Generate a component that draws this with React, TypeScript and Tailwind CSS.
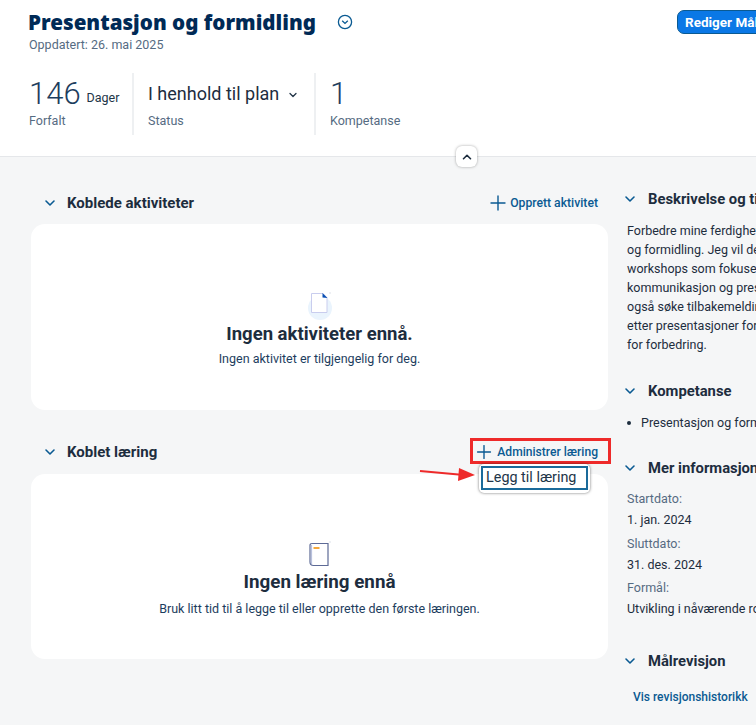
import { Plus, ChevronDown, ChevronUp } from "lucide-react";

function SectionChevron() {
  return <ChevronDown size={16} strokeWidth={2.4} className="shrink-0 text-[#0a5a92]" />;
}

function DocIcon() {
  return (
    <svg width="32" height="32" viewBox="0 0 32 32">
      <circle cx="16" cy="18" r="12" fill="#eaf4fd" />
      <path d="M7.5 3.5H19L23 8V22.5H7.5Z" fill="#fff" stroke="#c9cdee" strokeWidth="1" />
      <path d="M18.5 3L23.5 8L18.5 7.5Z" fill="#0a4fb3" />
      <circle cx="26" cy="3" r="0.8" fill="#d9dde6" />
    </svg>
  );
}

function BookIcon() {
  return (
    <svg width="24" height="28" viewBox="0 0 24 28" className="mr-[2px]">
      <path d="M5 3.5H21V25.5H6.5Q3 25.5 3 22V5.5Q3 3.5 5 3.5Z" fill="#fff" stroke="#5d6a96" strokeWidth="1.2" />
      <path d="M4.5 5V24" stroke="#b9c1dd" strokeWidth="1.2" />
      <rect x="6.5" y="7" width="6" height="2" fill="#f5a83c" />
      <circle cx="23" cy="2" r="0.8" fill="#d9dde6" />
    </svg>
  );
}

function Metric({ children, label, className }: { children: React.ReactNode; label: string; className: string }) {
  return (
    <div className={className}>
      <div className="flex h-[38px] items-end">{children}</div>
      <div className="mt-[1px] text-[12.5px] leading-[18px] text-[#556b82]">{label}</div>
    </div>
  );
}

function SideHeading({ title }: { title: string }) {
  return (
    <div className="-ml-[2px] flex h-[20px] items-center gap-[10px]">
      <SectionChevron />
      <span className="text-[14.8px] font-bold leading-[20px] text-[#1d2d3e]">{title}</span>
    </div>
  );
}

function Field({ label, value }: { label: string; value: string }) {
  return (
    <div className="mb-[2.5px]">
      <div className="text-[12.5px] leading-[21px] text-[#556b82]">{label}</div>
      <div className="text-[12.5px] leading-[21px] text-[#1d2d3e]">{value}</div>
    </div>
  );
}

export default function App() {
  return (
    <div className="relative h-[725px] w-[756px] overflow-hidden bg-[#f5f6f7] font-['Roboto','Liberation_Sans',sans-serif]">
      <header className="relative h-[157px] border-b border-[#e5e7ea] bg-white pl-[29px] pt-[8px]">
        <div className="-ml-[1px] flex items-center">
          <h1 className="font-['Noto_Sans',sans-serif] text-[20.6px] font-black leading-[28px] text-[#002a56]">Presentasjon og formidling</h1>
          <svg width="16" height="16" viewBox="0 0 16 16" className="ml-[21px]">
            <circle cx="8" cy="8" r="6.6" fill="none" stroke="#0a5a92" strokeWidth="1.3" />
            <path d="M5.2 6.8L8 9.4L10.8 6.8" fill="none" stroke="#0a5a92" strokeWidth="1.3" />
          </svg>
        </div>
        <div className="mt-[1px] text-[12.5px] leading-[16px] text-[#556b82]">Oppdatert: 26. mai 2025</div>
        <div className="mt-[20px] flex h-[62px]">
          <Metric label="Forfalt" className="w-[105px] border-r-2 border-[#eef0f2]">
            <span className="text-[31px] font-light leading-[34px] text-[#1d3d5e]">146</span>
            <span className="mb-[5px] ml-[6px] text-[12.5px] leading-[16px] text-[#223548]">Dager</span>
          </Metric>
          <Metric label="Status" className="w-[182px] border-r-2 border-[#eef0f2] pl-[14px]">
            <span className="mb-[6px] text-[18px] leading-[22px] text-[#1d2d3e]">I henhold til plan</span>
            <ChevronDown size={12} strokeWidth={2.6} className="mb-[10px] ml-[8px] text-[#223548]" />
          </Metric>
          <Metric label="Kompetanse" className="pl-[14px]">
            <span className="text-[31px] font-light leading-[34px] text-[#1d3d5e]">1</span>
          </Metric>
        </div>
        <button className="absolute left-[677px] top-[10px] flex h-[24px] w-[100px] items-center rounded-[7px] border border-[#0a5a92] bg-[#0a78e6] pl-[7px] text-[13.5px] font-bold whitespace-nowrap text-white">
          Rediger Mål
        </button>
        <button className="absolute left-[456px] top-[146px] flex h-[21px] w-[21px] items-center justify-center rounded-[6px] bg-white shadow-[0_0_3px_rgba(0,0,0,0.35)]">
          <ChevronUp size={14} strokeWidth={2.8} className="text-[#1d2d3e]" />
        </button>
      </header>

      <div className="flex pl-[31px]">
        <main className="w-[577px] shrink-0 pt-[36px]">
          <div className="flex h-[20px] items-center justify-between pr-[10px]">
            <div className="flex items-center gap-[9px] pl-[11px]">
              <SectionChevron />
              <span className="text-[15px] font-bold leading-[20px] text-[#1d2d3e]">Koblede aktiviteter</span>
            </div>
            <div className="flex items-center text-[12.2px] font-medium text-[#0a5a92]">
              <Plus size={24} strokeWidth={1.4} />
              Opprett aktivitet
            </div>
          </div>
          <section className="mt-[11px] flex h-[186px] flex-col items-center rounded-[14px] bg-white pt-[66px]">
            <DocIcon />
            <h2 className="text-[18.5px] font-bold leading-[24px] text-[#1d2d3e]">Ingen aktiviteter ennå.</h2>
            <p className="mt-[4px] text-[12.5px] leading-[18px] text-[#1d3d5e]">Ingen aktivitet er tilgjengelig for deg.</p>
          </section>

          <div className="mt-[32px] flex h-[20px] items-center justify-between pr-[10px]">
            <div className="flex items-center gap-[9px] pl-[11px]">
              <SectionChevron />
              <span className="text-[15px] font-bold leading-[20px] text-[#1d2d3e]">Koblet læring</span>
            </div>
            <div className="flex items-center gap-[2px] text-[12.1px] font-medium text-[#0a5a92]">
              <Plus size={22} strokeWidth={1.5} />
              Administrer læring
            </div>
          </div>
          <section className="mt-[12px] flex h-[185px] flex-col items-center rounded-[14px] bg-white pt-[66px]">
            <BookIcon />
            <h2 className="mt-[2px] text-[18.8px] font-bold leading-[24px] text-[#1d2d3e]">Ingen læring ennå</h2>
            <p className="mt-[6px] text-[12.5px] leading-[18px] text-[#1d3d5e]">Bruk litt tid til å legge til eller opprette den første læringen.</p>
          </section>
        </main>

        <aside className="ml-[16px] w-[300px] shrink-0 pt-[32px] whitespace-nowrap">
          <SideHeading title="Beskrivelse og tiltak" />
          <p className="mt-[12px] pl-[3px] text-[12.5px] leading-[19px] text-[#1d2d3e]">
            Forbedre mine ferdigheter i presentasjon
            <br />
            og formidling. Jeg vil delta på kurs og
            <br />
            workshops som fokuserer på
            <br />
            kommunikasjon og presentasjon. Jeg vil
            <br />
            også søke tilbakemelding fra kolleger
            <br />
            etter presentasjoner for å finne områder
            <br />
            for forbedring.
          </p>
          <div className="mt-[27px]">
            <SideHeading title="Kompetanse" />
          </div>
          <ul className="mt-[13px] pl-[3px] text-[12.5px] leading-[18px] text-[#1d2d3e]">
            <li className="flex items-center gap-[10px]">
              <span className="h-[4px] w-[4px] rounded-full bg-[#1d2d3e]" />
              Presentasjon og formidling
            </li>
          </ul>
          <div className="mt-[26px]">
            <SideHeading title="Mer informasjon" />
          </div>
          <div className="mt-[10px] pl-[3px]">
            <Field label="Startdato:" value="1. jan. 2024" />
            <Field label="Sluttdato:" value="31. des. 2024" />
            <Field label="Formål:" value="Utvikling i nåværende rolle" />
          </div>
          <div className="mt-[32px]">
            <SideHeading title="Målrevisjon" />
          </div>
          <div className="mt-[17px] pl-[9px] text-[12px] font-medium leading-[18px] text-[#0a5a92]">Vis revisjonshistorikk</div>
        </aside>
      </div>

      {/* markering lagt oppå skjermbildet */}
      <div className="absolute left-[470px] top-[438px] h-[26px] w-[141px] border-[3px] border-[#ee2a2a]" />
      <div className="absolute left-[479px] top-[464px] h-[29px] w-[111px] rounded-[5px] bg-white pl-[2px] pt-[2px] shadow-[0_0_3px_rgba(0,0,0,0.55)]">
        <div className="flex h-[24px] w-[107px] items-center border-2 border-[#1a6a9a] pl-[3px] text-[14.4px] text-[#223548]">Legg til læring</div>
      </div>
      <svg width="60" height="16" viewBox="0 0 60 16" className="absolute left-[418px] top-[466px]">
        <path d="M2 5L46 9" stroke="#ee2a2a" strokeWidth="2" />
        <path d="M57 9L41 2L40 15Z" fill="#ee2a2a" />
      </svg>
    </div>
  );
}
